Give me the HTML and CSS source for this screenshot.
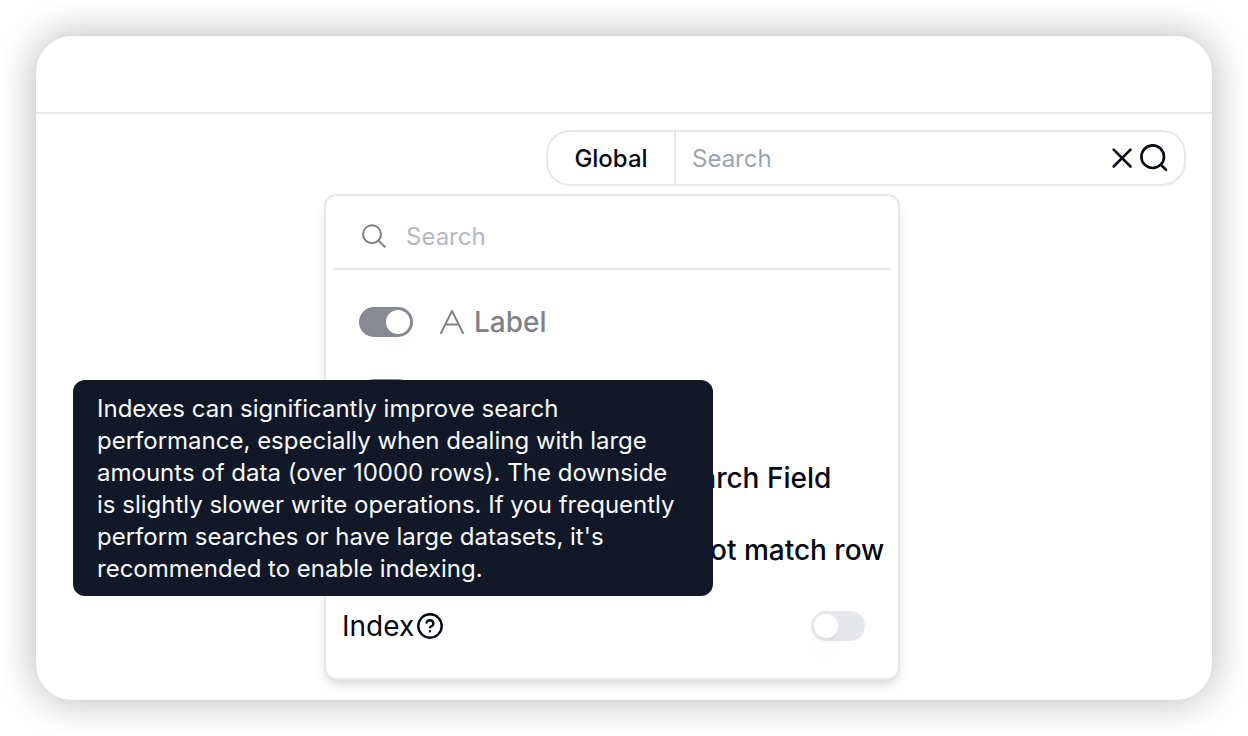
FILE: index.html
```html
<!DOCTYPE html>
<html lang="en">
<head>
<meta charset="utf-8">
<title>Search</title>
<link rel="stylesheet" href="styles.css">
</head>
<body>
<main class="window">
  <header class="topbar"></header>
  <div class="toolbar">
    <form class="searchbar">
      <button type="button" class="scope">Global</button>
      <input class="query" type="text" placeholder="Search" aria-label="Search">
      <span class="actions">
        <button type="button" aria-label="Clear">
          <svg width="24" height="24" viewBox="0 0 24 24"><path d="M3.7 3.7l16.8 16.8M20.5 3.7l-16.8 16.8"/></svg>
        </button>
        <button type="button" aria-label="Run search">
          <svg width="32" height="32" viewBox="0 0 32 32"><circle cx="14.7" cy="14.7" r="11.3"/><path d="M22.6 22.6l5.4 5.2"/></svg>
        </button>
      </span>
    </form>
  </div>

  <section class="panel">
    <div class="panel-search">
      <svg class="thin" width="28" height="28" viewBox="0 0 28 28"><circle cx="12" cy="12.2" r="9"/><path d="M18.4 18.6l6.4 6.2"/></svg>
      <input class="field-query" type="text" placeholder="Search" aria-label="Search fields">
    </div>
    <div class="fields">
      <label class="field">
        <input class="switch" type="checkbox" checked disabled>
        <svg class="thin" width="28" height="28" viewBox="0 0 28 28"><path d="M3 25L14 3l11 22M7.4 16.5h13.2"/></svg>
        <span>Label</span>
      </label>
      <label class="field">
        <input class="switch" type="checkbox" checked disabled aria-label="Field">
      </label>
    </div>
    <div class="options">
      <button type="button" class="option">All Search Field</button>
      <button type="button" class="option">Hide not match row</button>
    </div>
    <div class="index-row">
      <label class="index-label" for="index">Index
        <svg class="help" width="28" height="28" viewBox="0 0 28 28"><circle cx="14" cy="14" r="11.7"/><path d="M10.6 10.6a3.5 3.5 0 0 1 6.8 1.1c0 2.3-3.4 3.2-3.4 3.6M14 19.2v.1"/></svg>
      </label>
      <input class="switch" type="checkbox" id="index" aria-describedby="index-tip">
    </div>
  </section>

  <div class="tooltip" id="index-tip" role="tooltip">Indexes can significantly improve search performance, especially when dealing with large amounts of data (over 10000 rows). The downside is slightly slower write operations. If you frequently perform searches or have large datasets, it's recommended to enable indexing.</div>
</main>
</body>
</html>
```
FILE: styles.css
```css
* { box-sizing: border-box; }

body {
  margin: 0;
  padding: 36px;
  min-height: 100vh;
  display: flex;
  background: #fff;
  color: #030712;
  font-family: Inter, "Liberation Sans", sans-serif;
  font-size: 24px;
}

button, input { font: inherit; color: inherit; margin: 0; }
button { border: 0; background: none; padding: 0; cursor: pointer; }

svg {
  display: block;
  flex: none;
  fill: none;
  stroke: currentColor;
  stroke-width: 2.6;
  stroke-linecap: round;
  stroke-linejoin: round;
}
.thin { stroke-width: 2; }
.help { stroke-width: 2.4; }

.window {
  position: relative;
  flex: 1;
  border-radius: 36px;
  background: #fff;
  box-shadow: 0 0 40px rgba(0, 0, 0, 0.3);
}

.topbar { height: 78px; border-bottom: 2px solid #e5e7eb; }

.toolbar { display: flex; justify-content: flex-end; padding: 16px 26px; }

.searchbar {
  display: flex;
  align-items: center;
  width: 640px;
  height: 56px;
  padding-right: 14px;
  border: 2px solid #e5e7eb;
  border-radius: 24px;
}
.scope {
  align-self: stretch;
  width: 128px;
  border-right: 2px solid #e5e7eb;
  font-weight: 500;
}
.query, .field-query {
  flex: 1;
  min-width: 0;
  border: 0;
  outline: 0;
  background: none;
  padding: 0 16px;
}
.query::placeholder { color: #9ca3af; opacity: 1; }
.actions { display: flex; align-items: center; gap: 4px; }

.panel {
  position: absolute;
  top: 158px;
  left: 288px;
  width: 576px;
  padding: 0 8px 12px;
  border: 2px solid #e5e7eb;
  border-radius: 12px;
  background: #fff;
  box-shadow: 0 8px 12px -2px rgba(0, 0, 0, 0.1), 0 4px 8px -4px rgba(0, 0, 0, 0.1);
}
.panel-search {
  display: flex;
  align-items: center;
  gap: 2px;
  height: 74px;
  padding: 8px 26px 0;
  border-bottom: 2px solid #e5e7eb;
  color: #7f7f83;
}
.field-query::placeholder { color: #b5b9c2; opacity: 1; }

.fields { padding: 16px 25px 12px; }
.field {
  display: flex;
  align-items: center;
  height: 72px;
  font-size: 28px;
  font-weight: 500;
  color: #818286;
}
.field svg { margin: 0 8px 0 25px; }

.options { display: flex; flex-direction: column; padding-left: 290px; }
.option {
  height: 72px;
  text-align: left;
  white-space: nowrap;
  font-size: 28px;
  font-weight: 500;
}

.index-row {
  display: flex;
  align-items: center;
  justify-content: space-between;
  height: 80px;
  padding: 0 25px 0 8px;
}
.index-label { display: flex; align-items: center; gap: 2px; font-size: 28px; }

.switch {
  appearance: none;
  display: flex;
  align-items: center;
  flex: none;
  width: 54px;
  height: 30px;
  padding: 0 3px;
  border-radius: 15px;
  background: #e5e7eb;
}
.switch::before {
  content: "";
  width: 24px;
  height: 24px;
  border-radius: 50%;
  background: #fff;
  box-shadow: 0 16px 24px -4px rgba(0, 0, 0, 0.06), 0 4px 8px -4px rgba(0, 0, 0, 0.08);
}
.switch:checked { justify-content: flex-end; background: #888a93; }
.switch:checked::before { box-shadow: 0 16px 24px -4px rgba(0, 0, 0, 0.04); }

.tooltip {
  position: absolute;
  top: 344px;
  left: 37px;
  width: 640px;
  padding: 13px 24px 11px;
  border-radius: 12px;
  background: #111827;
  color: #f9fafb;
  line-height: 32px;
}
```
